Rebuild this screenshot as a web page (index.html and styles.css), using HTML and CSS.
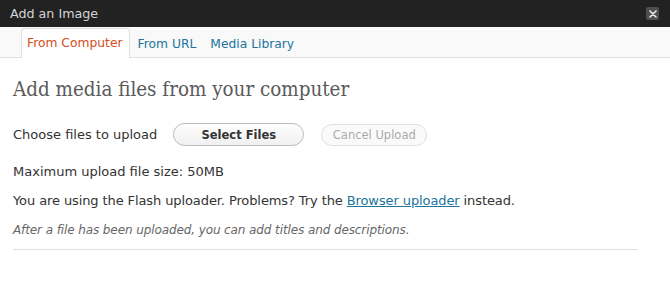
FILE: index.html
```html
<!DOCTYPE html>
<html>
<head>
<meta charset="utf-8">
<link rel="stylesheet" href="styles.css">
</head>
<body>
<div class="titlebar">
  <span class="title">Add an Image</span>
  <span class="close"><svg width="10" height="10" viewBox="0 0 10 10"><path d="M2 2 L8 8 M8 2 L2 8" stroke="#e6e6e6" stroke-width="1.7" stroke-linecap="round"/></svg></span>
</div>
<div class="tabs">
  <a class="tab active">From Computer</a>
  <a class="tab">From URL</a>
  <a class="tab">Media Library</a>
</div>
<div class="content">
  <h3 class="heading">Add media files from your computer</h3>
  <div class="upload-row">
    <span class="label">Choose files to upload</span>
    <button class="btn primary">Select Files</button>
    <button class="btn disabled">Cancel Upload</button>
  </div>
  <p class="line size">Maximum upload file size: 50MB</p>
  <p class="line flash">You are using the Flash uploader. Problems? Try the <a class="link">Browser uploader</a> instead.</p>
  <p class="line note">After a file has been uploaded, you can add titles and descriptions.</p>
  <div class="rule"></div>
</div>
</body>
</html>
```
FILE: styles.css
```css
html, body {
  margin: 0;
  padding: 0;
  background: #fff;
}
body {
  width: 670px;
  height: 284px;
  overflow: hidden;
  font-family: "DejaVu Sans", Verdana, sans-serif;
  font-size: 13px;
  color: #333;
}
.titlebar {
  height: 27px;
  background: #222;
  display: flex;
  align-items: center;
  justify-content: space-between;
  padding: 0 11px 0 10px;
}
.title {
  color: #d4d4d4;
  font-size: 12.7px;
}
.close {
  width: 13px;
  height: 13px;
  background: #4e4e4e;
  border-radius: 2px;
  display: flex;
  align-items: center;
  justify-content: center;
}
.close svg { display: block; }
.tabs {
  height: 30px;
  background: #f9f9f9;
  border-bottom: 1px solid #dfdfdf;
  display: flex;
  align-items: flex-end;
  padding-left: 21px;
}
.tab {
  color: #21759b;
  font-size: 12.3px;
  padding: 0 6px 6px 6px;
  line-height: 16px;
  border: 1px solid transparent;
  border-bottom: none;
  margin-bottom: -1px;
}
.tab.active {
  color: #d54e21;
  background: #fff;
  border-color: #dfdfdf;
  border-radius: 4px 4px 0 0;
  padding: 6px 6px 7px 5px;
  margin-right: 1px;
}
.content {
  padding: 0 32px 0 13px;
}
.heading {
  margin: 18px 0 0 0;
  font-family: "DejaVu Serif Condensed", "DejaVu Serif", Georgia, serif;
  font-weight: normal;
  font-size: 20.4px;
  line-height: 26px;
  color: #5a5a5a;
}
.upload-row {
  display: flex;
  align-items: center;
  margin-top: 21px;
  height: 23px;
}
.label {
  margin-right: 16px;
}
.btn {
  font-family: "DejaVu Sans", Verdana, sans-serif;
  height: 23px;
  border-radius: 12px;
  padding: 0;
  margin-right: 17px;
}
.btn.primary {
  width: 131px;
  font-size: 11.5px;
  font-weight: bold;
  color: #333;
  border: 1px solid #bbb;
  background: linear-gradient(#fefefe, #f0f0f0);
}
.btn.disabled {
  width: 106px;
  height: 22px;
  font-size: 11.5px;
  color: #aaa;
  border: 1px solid #e0e0e0;
  background: #fafafa;
}
.line {
  margin: 0;
  line-height: 18px;
  margin-top: 11px;
}
.size { margin-top: 17px; }
.flash { letter-spacing: -0.1px; }
.link {
  color: #21759b;
  text-decoration: underline;
}
.note {
  font-size: 12px;
  letter-spacing: -0.1px;
  font-style: italic;
  color: #666;
}
.rule {
  height: 1px;
  background: #dfdfdf;
  margin-top: 10px;
}
```
